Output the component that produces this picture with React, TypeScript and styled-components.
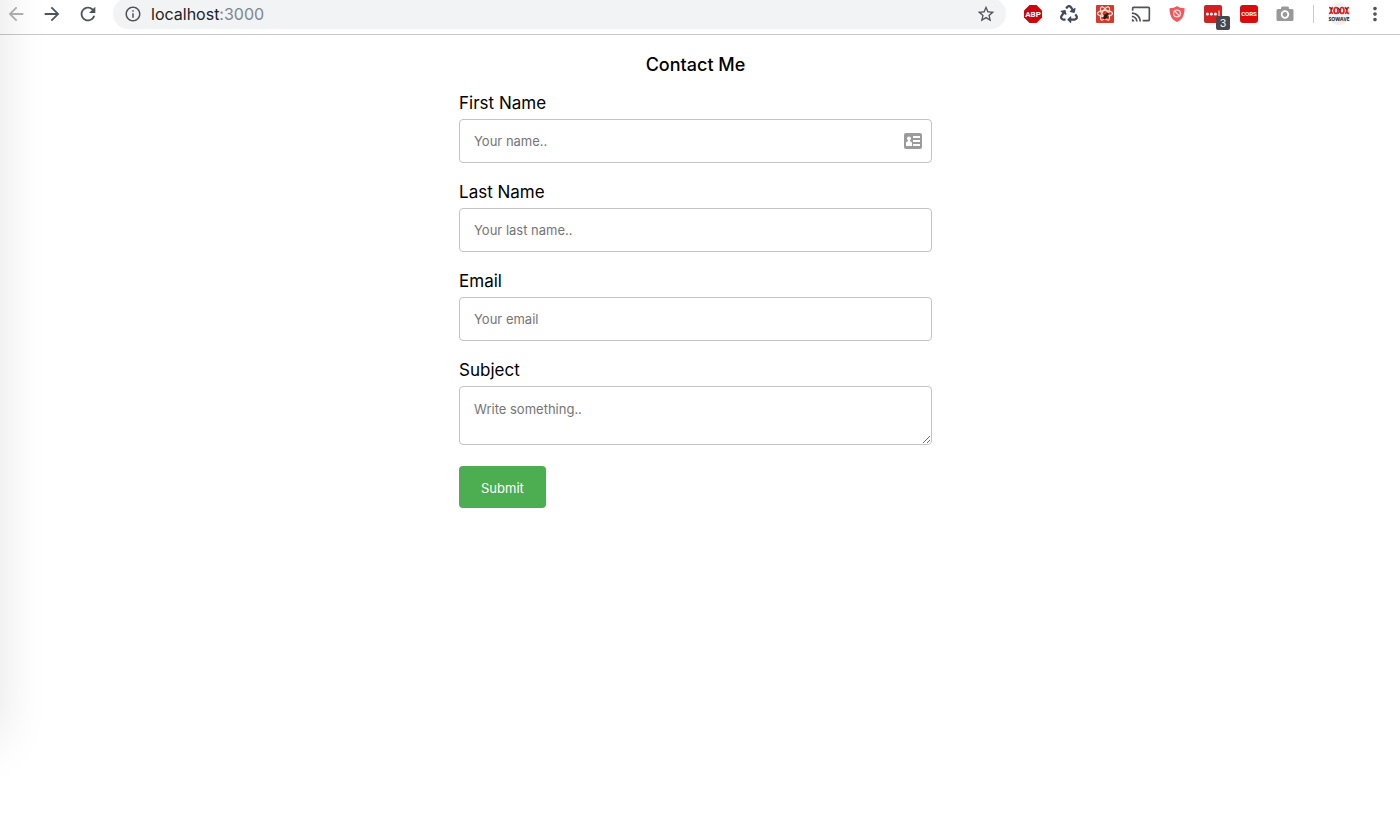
import React from 'react';
import styled, { createGlobalStyle } from 'styled-components';
import {
  MdArrowBack,
  MdArrowForward,
  MdRefresh,
  MdInfoOutline,
  MdStarBorder,
  MdCast,
  MdMoreVert,
} from 'react-icons/md';
import { FaRecycle } from 'react-icons/fa';

const GlobalStyle = createGlobalStyle`
  *, *::before, *::after { box-sizing: border-box; }
  body {
    margin: 0;
    background: #fff;
    color: #000;
    font-family: Inter, "Liberation Sans", sans-serif;
    overflow-x: hidden;
  }
`;

const Page = styled.div`
  min-height: 100vh;
  overflow: hidden;
`;

const EdgeShadow = styled.div`
  position: absolute;
  left: -60px;
  top: -60px;
  width: 60px;
  height: 800px;
  box-shadow: 0 0 50px rgba(0, 0, 0, 0.11);
  pointer-events: none;
`;

const Toolbar = styled.header`
  display: flex;
  align-items: flex-start;
  height: 37px;
  margin-top: -2px;
  padding: 0 7px 0 0;
  border-bottom: 1px solid #c6c8c9;
`;

const IconButton = styled.button<{ $color?: string }>`
  position: relative;
  display: flex;
  flex: none;
  align-items: center;
  justify-content: center;
  width: 36px;
  height: 32px;
  padding: 0;
  border: 0;
  background: none;
  color: ${({ $color }) => $color ?? '#50545a'};
`;

const Navigation = styled.nav`
  display: flex;
  width: 113px;
  margin-left: -2px;
  margin-right: 2px;
`;

const AddressBar = styled.div`
  display: flex;
  flex: 1;
  align-items: center;
  height: 31px;
  padding: 0 2px 0 11px;
  border-radius: 16px;
  background: #f1f3f4;
  color: #50545a;
`;

const Url = styled.span`
  flex: 1;
  margin-left: 9px;
  font-size: 16px;
  line-height: 20px;
  color: #202124;
`;

const Port = styled.span`
  color: #80868b;
`;

const Extensions = styled.div`
  display: flex;
  align-items: center;
  margin-left: 9px;
`;

const Divider = styled.span`
  width: 1px;
  height: 18px;
  margin: 0 7px 0 10px;
  background: #c8cacc;
`;

const Count = styled.span`
  position: absolute;
  right: 1px;
  bottom: 0;
  width: 14px;
  height: 14px;
  border-radius: 2px;
  background: #46484b;
  color: #fff;
  font-size: 11px;
  line-height: 14px;
  text-align: center;
`;

const Main = styled.main`
  padding: 18px 9px 24px 0;
`;

const Form = styled.form`
  width: 34%;
  min-width: 280px;
  margin: 0 auto;
`;

const Title = styled.h1`
  margin: 0 0 14px;
  font-size: 18px;
  font-weight: 500;
  line-height: 24px;
  text-align: center;
`;

const Field = styled.div`
  position: relative;
  margin-bottom: 17px;
`;

const Label = styled.label`
  display: block;
  margin-bottom: 4px;
  font-size: 17px;
  line-height: 24px;
`;

const controlStyle = `
  display: block;
  width: 100%;
  border: 1px solid #c4c4c4;
  border-radius: 4px;
  background: #fff;
  color: #000;
  font-family: inherit;
  font-size: 13px;
  line-height: 16px;
  outline: none;
  &::placeholder { color: #757575; opacity: 1; }
`;

const TextInput = styled.input`
  ${controlStyle}
  height: 44px;
  padding: 0 14px;
`;

const TextArea = styled.textarea`
  ${controlStyle}
  height: 59px;
  padding: 14px;
  margin-bottom: 21px;
  resize: vertical;
`;

const AutofillMark = styled.span`
  position: absolute;
  right: 10px;
  bottom: 14px;
  display: flex;
`;

const Submit = styled.button`
  padding: 14px 22px 12px;
  border: 0;
  border-radius: 4px;
  background: #4cae50;
  color: #fff;
  font-family: inherit;
  font-size: 13px;
  line-height: 16px;
`;

const AdBlockIcon = () => (
  <svg width="20" height="20" viewBox="0 0 20 20" aria-hidden="true">
    <path d="M6.500 1h7L19 6.500v7L13.500 19h-7L1 13.500v-7z" fill="#cc0610" />
    <text x="10" y="13" textAnchor="middle" fill="#fff" fontFamily="Roboto, sans-serif" fontWeight="700" fontSize="8">ABP</text>
  </svg>
);

const ReactToolIcon = () => (
  <svg width="18" height="18" viewBox="0 0 18 18" aria-hidden="true">
    <rect width="18" height="18" rx="1" fill="#d63a2c" />
    <g fill="none" stroke="#fbe3df" strokeWidth="1.200">
      <ellipse cx="9" cy="8.500" rx="7.500" ry="3" />
      <ellipse cx="9" cy="8.500" rx="7.500" ry="3" transform="rotate(60 9 8.500)" />
      <ellipse cx="9" cy="8.500" rx="7.500" ry="3" transform="rotate(120 9 8.500)" />
    </g>
    <g fill="#2b1210" stroke="#2b1210" strokeWidth="0.800">
      <ellipse cx="9.500" cy="11.500" rx="1.300" ry="2.600" transform="rotate(40 9.500 11.500)" />
      <circle cx="11.800" cy="8.800" r="0.900" />
      <path d="M8 9.500l4.500 3.500M8 14l5-3" fill="none" />
    </g>
  </svg>
);

const ShieldIcon = () => (
  <svg width="18" height="18" viewBox="0 0 18 18" aria-hidden="true">
    <path d="M9 1c2 1.500 4.500 2.200 7.500 2.200C16.500 10 14.500 14.500 9 17 3.500 14.500 1.500 10 1.500 3.200 4.500 3.200 7 2.500 9 1z" fill="#f0585e" />
    <circle cx="9" cy="8.500" r="3.400" fill="#f0585e" stroke="#fbd9da" strokeWidth="1.300" />
    <path d="M6.800 6.300l4.400 4.400" stroke="#fbd9da" strokeWidth="1.300" />
  </svg>
);

const PasswordIcon = () => (
  <svg width="18" height="18" viewBox="0 0 18 18" aria-hidden="true">
    <rect width="18" height="18" rx="2" fill="#d3211f" />
    <g fill="#fff">
      <circle cx="3.400" cy="9" r="1.500" />
      <circle cx="7.400" cy="9" r="1.500" />
      <circle cx="11.400" cy="9" r="1.500" />
      <rect x="14.500" y="5.500" width="1" height="6" />
    </g>
  </svg>
);

const CorsIcon = () => (
  <svg width="18" height="18" viewBox="0 0 18 18" aria-hidden="true">
    <rect width="18" height="18" rx="3" fill="#d90b0b" />
    <text x="9" y="11" textAnchor="middle" fill="#fff" fontFamily="Roboto, sans-serif" fontWeight="700" fontSize="6">CORS</text>
  </svg>
);

const CameraIcon = () => (
  <svg width="18" height="16" viewBox="0 0 18 16" aria-hidden="true">
    <path d="M2 3h3V2a1.500 1.500 0 0 1 1.500-1.500h5A1.500 1.500 0 0 1 13 2v1h3a1.500 1.500 0 0 1 1.500 1.500v9A1.500 1.500 0 0 1 16 15H2A1.500 1.500 0 0 1 .5 13.500v-9A1.500 1.500 0 0 1 2 3z" fill="#999" />
    <circle cx="9" cy="8.500" r="3.300" fill="#999" stroke="#fff" strokeWidth="1.800" />
  </svg>
);

const ProfileIcon = () => (
  <svg width="22" height="22" viewBox="0 0 22 22" aria-hidden="true">
    <circle cx="11" cy="11" r="11" fill="#f1f1f1" />
    <g fill="none" stroke="#df2020" strokeWidth="1.700">
      <path d="M1 4.500c3 0 3 6 0 6M5 4.500c-2.500 1-2.500 5 0 6" />
      <ellipse cx="8" cy="7.500" rx="2" ry="3" />
      <ellipse cx="14" cy="7.500" rx="2" ry="3" />
      <path d="M17 4.500c2.500 1 2.500 5 0 6M21 4.500c-3 0-3 6 0 6" />
    </g>
    <path d="M3 4.500l1 2M10 4.500l2 3M17 4.500l2 2M10.500 10.500l1-2" fill="none" stroke="#301414" />
    <text x="11" y="17.500" textAnchor="middle" fill="#151515" fontFamily="Open Sans, sans-serif" fontWeight="700" fontSize="5">SOWAVE</text>
  </svg>
);

const ContactCardIcon = () => (
  <svg width="18" height="16" viewBox="0 0 18 16" aria-hidden="true">
    <rect width="18" height="16" rx="2" fill="#9b9b9b" />
    <g fill="#fff">
      <circle cx="5" cy="5.500" r="2" />
      <path d="M4 6h2v2l2 1.500V13H2V9.500L4 8z" />
      <rect x="9" y="3" width="7" height="2" />
      <rect x="9" y="7" width="7" height="2" />
      <rect x="9" y="11" width="7" height="2" />
    </g>
  </svg>
);

const fields = [
  { id: 'firstname', label: 'First Name', placeholder: 'Your name..', type: 'text', autofill: true },
  { id: 'lastname', label: 'Last Name', placeholder: 'Your last name..', type: 'text' },
  { id: 'email', label: 'Email', placeholder: 'Your email', type: 'email' },
];

export default function App() {
  return (
    <Page>
      <GlobalStyle />
      <Toolbar>
        <Navigation>
          <IconButton aria-label="Back" $color="#b0b2b4"><MdArrowBack size={22} /></IconButton>
          <IconButton aria-label="Forward"><MdArrowForward size={22} /></IconButton>
          <IconButton aria-label="Reload"><MdRefresh size={22} /></IconButton>
        </Navigation>
        <AddressBar>
          <MdInfoOutline size={18} />
          <Url>localhost<Port>:3000</Port></Url>
          <IconButton aria-label="Bookmark"><MdStarBorder size={20} /></IconButton>
        </AddressBar>
        <Extensions>
          <IconButton aria-label="Ad blocker"><AdBlockIcon /></IconButton>
          <IconButton aria-label="Recycle" $color="#404b57"><FaRecycle size={18} /></IconButton>
          <IconButton aria-label="React tools"><ReactToolIcon /></IconButton>
          <IconButton aria-label="Cast"><MdCast size={20} /></IconButton>
          <IconButton aria-label="Shield"><ShieldIcon /></IconButton>
          <IconButton aria-label="Passwords"><PasswordIcon /><Count>3</Count></IconButton>
          <IconButton aria-label="CORS"><CorsIcon /></IconButton>
          <IconButton aria-label="Screenshot"><CameraIcon /></IconButton>
          <Divider />
          <IconButton aria-label="Profile"><ProfileIcon /></IconButton>
          <IconButton aria-label="Menu"><MdMoreVert size={22} /></IconButton>
        </Extensions>
      </Toolbar>
      <Main>
        <Form onSubmit={(event) => event.preventDefault()}>
          <Title>Contact Me</Title>
          {fields.map((field) => (
            <Field key={field.id}>
              <Label htmlFor={field.id}>{field.label}</Label>
              <TextInput id={field.id} type={field.type} placeholder={field.placeholder} />
              {field.autofill && <AutofillMark><ContactCardIcon /></AutofillMark>}
            </Field>
          ))}
          <Label htmlFor="subject">Subject</Label>
          <TextArea id="subject" placeholder="Write something.." />
          <Submit type="submit">Submit</Submit>
        </Form>
      </Main>
      <EdgeShadow />
    </Page>
  );
}
